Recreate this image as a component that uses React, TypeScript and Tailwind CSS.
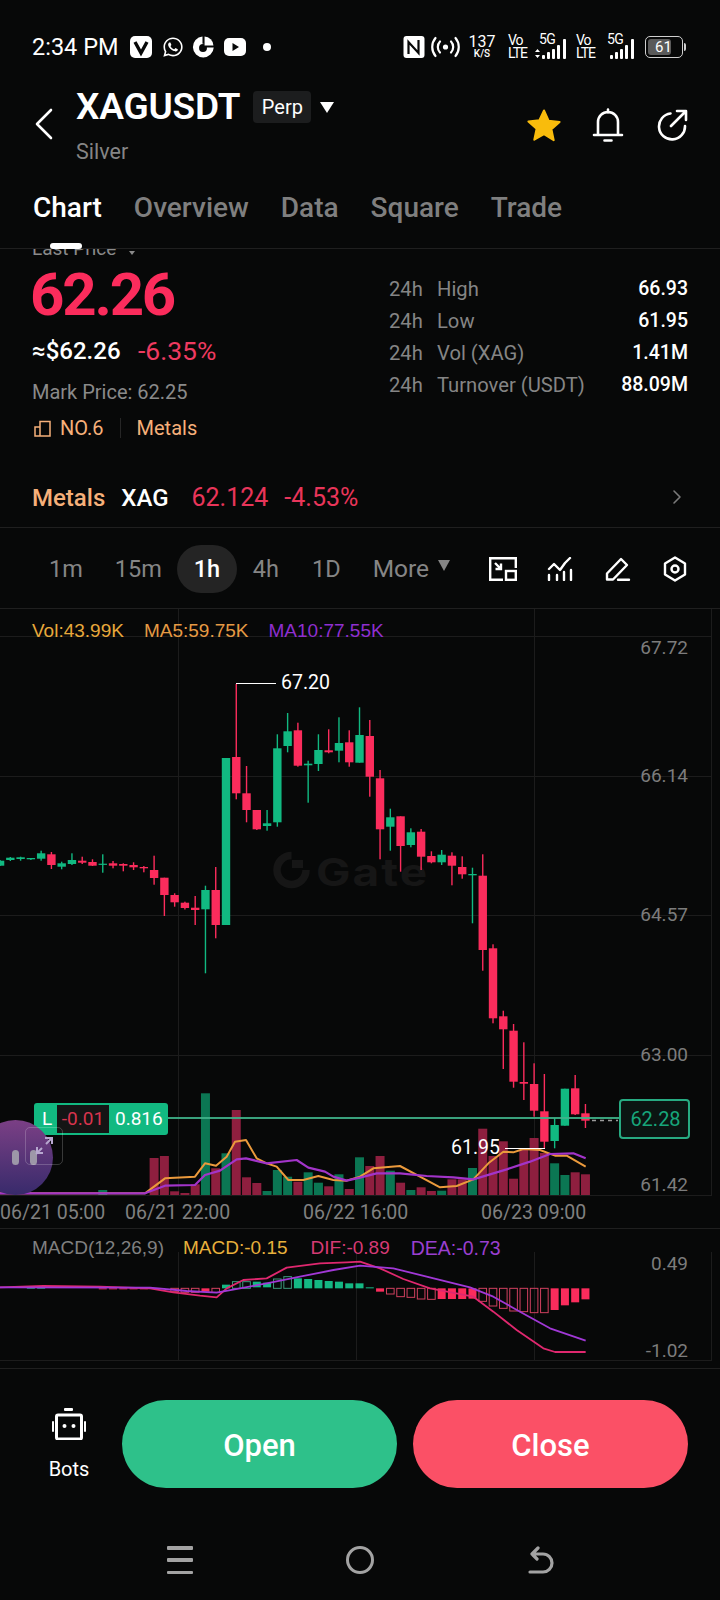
import React from 'react';
import { FaWhatsapp } from 'react-icons/fa';

const X = (i: number) => 0.06 + 10.27 * i;
const G = '#11b981';
const R = '#fb2c5c';
// [green?1:0, wickTop, wickBottom, bodyTop, bodyBottom]
const candles: number[][] = [
  [1, 860, 866, 860.7, 865.7], [1, 857, 861, 857.7, 860], [1, 856.7, 860.7, 857.3, 859], [1, 858, 860, 858, 859.3],
  [1, 850.7, 860.7, 853.3, 858.7], [0, 852, 869, 854.3, 865], [1, 861.7, 869.3, 863.3, 866.7], [1, 853.3, 865, 860, 864],
  [0, 856.7, 864, 860.7, 862.7], [0, 859.3, 866, 862, 865.7], [1, 854.3, 872.7, 863.7, 864.7], [0, 861, 868.3, 863.3, 865.7],
  [0, 863.3, 871.3, 864, 865.7], [0, 862.3, 870, 865, 867.3], [0, 866, 872.3, 867, 868.3], [0, 855.7, 884.7, 870, 878],
  [0, 877.7, 916, 877.7, 895], [0, 893.3, 906.7, 895, 902.3], [0, 901.7, 909.5, 902.7, 908], [0, 896, 925, 907.7, 910],
  [1, 885.7, 973.3, 890, 909.3], [0, 867, 938.3, 890, 925], [1, 758, 925, 758, 925],
  [0, 684, 799.3, 757, 793.3], [0, 766, 822.3, 793.3, 810], [0, 810, 830, 810, 829.3], [1, 810, 830.7, 823.3, 826],
  [1, 734.3, 826.7, 748.3, 822.3], [1, 713, 752.3, 731.3, 746], [0, 722.7, 766.7, 730.3, 765.7], [1, 760.7, 802.7, 763.7, 765.3],
  [1, 734.3, 771, 750, 764], [0, 729.3, 753.3, 750.3, 752.3], [1, 717.3, 762.3, 743, 750.7], [0, 730.3, 766.7, 742.3, 762.3],
  [1, 707.3, 762.7, 735, 762.7], [0, 720, 796.7, 736, 776.7], [0, 770, 859.3, 778.3, 829.3], [1, 808.7, 850.7, 817.3, 826.7],
  [0, 816.3, 871.7, 816.3, 846], [1, 828.3, 847.3, 832.3, 845], [0, 829, 870, 831.7, 856.7], [0, 851.3, 863.3, 856, 862.3],
  [1, 850, 865, 854.7, 862.3], [0, 852.3, 885.3, 855.7, 865.7], [0, 856.3, 878.7, 867, 874.3], [1, 867.7, 923.3, 874, 875.3],
  [0, 854.3, 970.7, 875.7, 950], [0, 944.3, 1023.3, 948.3, 1018.3], [0, 1010.7, 1069, 1016.3, 1029.3], [0, 1024, 1087.7, 1030.7, 1081.7],
  [0, 1042.3, 1100, 1082, 1083.7], [0, 1063.3, 1116.7, 1084, 1110.7], [0, 1074, 1148.3, 1111.3, 1141.7], [1, 1118.3, 1148.3, 1125, 1141],
  [1, 1088.7, 1125.7, 1088.7, 1125.7], [0, 1075, 1115, 1088.3, 1114.3], [0, 1104, 1128, 1113.3, 1120.7],
];
// [idx, top, green?1:0]
const vols: number[][] = [
  [10, 1190, 1], [15, 1158, 0], [16, 1156, 0], [17, 1191.3, 0], [18, 1193, 0], [19, 1184.3, 0], [20, 1093.3, 1], [21, 1168.3, 0],
  [22, 1153.3, 1], [23, 1110, 0], [24, 1177.3, 0], [25, 1183, 0], [26, 1191, 1], [27, 1170, 1], [28, 1176.7, 1], [29, 1181.7, 0],
  [30, 1172.3, 1], [31, 1182.7, 1], [32, 1186.3, 0], [33, 1174.3, 1], [34, 1189, 0], [35, 1157.3, 1], [36, 1166, 0], [37, 1156, 0],
  [38, 1170.7, 1], [39, 1182.7, 0], [40, 1190, 1], [41, 1187.3, 0], [42, 1191, 0], [43, 1190.7, 1], [44, 1179.3, 0], [45, 1179.3, 0],
  [46, 1168, 1], [47, 1128.7, 0], [48, 1156, 0], [49, 1141.3, 0], [50, 1178.7, 0], [51, 1150, 0], [52, 1138, 0], [53, 1153, 0],
  [54, 1163.3, 1], [55, 1175, 1], [56, 1172.3, 0], [57, 1174.3, 0],
];
const pts = (a: number[][], xo: number, yo: number) => a.map(([x, y]) => `${x / 3 + xo},${y / 3 + yo}`).join(' ');
const maOrange =
  pts([[0, 880], [435, 880], [495, 835], [585, 830], [615, 790], [648, 797], [680, 770], [705, 725], [738, 720], [770, 775], [800, 790], [830, 800], [865, 840], [910, 840], [955, 828], [1000, 840], [1040, 842], [1080, 830]], 0, 900) + ' ' +
  pts([[40, 805], [120, 798], [180, 830], [240, 862], [290, 858], [340, 838], [385, 790], [430, 755], [460, 757], [490, 747], [540, 750], [585, 767], [620, 767], [677, 800]], 360, 900);
const maPurple =
  pts([[0, 880], [435, 880], [495, 857], [585, 855], [615, 825], [660, 812], [710, 778], [738, 775], [800, 790], [890, 780], [925, 803], [975, 815], [1000, 830], [1040, 842], [1080, 833]], 0, 900) + ' ' +
  pts([[50, 820], [120, 820], [200, 828], [280, 832], [340, 838], [440, 808], [510, 785], [570, 762], [640, 760], [677, 775]], 360, 900);
const dif =
  pts([[0, 262], [130, 258], [300, 260], [450, 265], [520, 277], [600, 287], [650, 292], [680, 265], [730, 240], [800, 235], [860, 203], [960, 190], [1040, 187], [1080, 185]], 0, 1200) + ' ' +
  pts([[60, 205], [130, 237], [210, 265], [340, 290], [400, 335], [470, 390], [550, 445], [585, 456], [677, 456]], 360, 1200);
const dea =
  pts([[0, 262], [450, 263], [560, 273], [650, 278], [720, 265], [800, 250], [900, 230], [1000, 210], [1080, 197]], 0, 1200) + ' ' +
  pts([[100, 205], [200, 230], [330, 262], [400, 290], [480, 335], [570, 385], [677, 422]], 360, 1200);
// [idx, top, bottom, green, hollow]  zoom-y
const macd: number[][] = [
  [3, 262, 266, 1, 0], [4, 262, 266, 1, 0], [10, 265, 268, 0, 0], [11, 265, 268, 0, 0], [12, 265, 268, 0, 0], [13, 265, 268, 0, 0], [14, 265, 268, 0, 0],
  [17, 265, 275, 0, 1], [18, 265, 277, 0, 1], [19, 265, 277, 0, 1], [20, 265, 275, 0, 0], [21, 265, 277, 0, 1],
  [22, 254, 265, 1, 0], [23, 245, 265, 1, 1], [24, 245, 265, 1, 1], [25, 245, 262, 1, 0], [26, 248, 262, 1, 0], [27, 237, 265, 1, 1], [28, 230, 265, 1, 1],
  [29, 235, 265, 1, 0], [30, 237, 265, 1, 0], [31, 240, 265, 1, 0], [32, 243, 265, 1, 0], [33, 245, 265, 1, 0], [34, 250, 265, 1, 0], [35, 250, 265, 1, 0], [36, 262, 265, 1, 0],
  [37, 265, 275, 0, 0], [38, 265, 282, 0, 1], [39, 265, 290, 0, 1], [40, 265, 292, 0, 1], [41, 265, 297, 0, 1], [42, 265, 298, 0, 1], [43, 265, 297, 0, 0], [44, 265, 297, 0, 0], [45, 265, 297, 0, 0], [46, 265, 296, 0, 0],
  [47, 265, 304, 0, 1], [48, 265, 318, 0, 1], [49, 265, 325, 0, 1], [50, 265, 333, 0, 1], [51, 265, 335, 0, 1], [52, 265, 338, 0, 1], [53, 265, 338, 0, 1],
  [54, 265, 330, 0, 0], [55, 265, 316, 0, 0], [56, 265, 307, 0, 0], [57, 265, 298, 0, 0],
];

const Signal = ({ arrows }: { arrows?: boolean }) => (
  <svg width="34" height="22" viewBox="0 0 34 22" fill="#fff">
    {arrows && <path d="M1 14l2.5-3 2.5 3zM1 17l2.5 3 2.5-3z" />}
    <rect x="8" y="17" width="3" height="4" rx="1" />
    <rect x="13" y="14" width="3" height="7" rx="1" />
    <rect x="18" y="11" width="3" height="10" rx="1" />
    <rect x="23" y="7" width="3" height="14" rx="1" />
    <rect x="29" y="1" width="3" height="20" rx="1" />
  </svg>
);

const StatusBar = () => (
  <div className="h-[72px] pt-[22px] pl-[32px] text-white flex items-center">
    <span className="text-[23.5px] leading-[26px] w-[98px] shrink-0">2:34 PM</span>
    <svg width="22" height="22" viewBox="0 0 22 22" className="shrink-0">
      <rect width="22" height="22" rx="5" fill="#fff" />
      <path d="M5 6l6 11 6-11" fill="none" stroke="#070808" strokeWidth="3.4" />
    </svg>
    <FaWhatsapp className="ml-[10px] text-[22px] shrink-0" />
    <svg width="24" height="24" viewBox="0 0 23 23" className="ml-[7px] shrink-0">
      <path d="M11 1.5A10 10 0 1 0 21.8 12H12V8.5h-1z" fill="#fff" />
      <circle cx="11.5" cy="12.5" r="3.8" fill="#070808" />
      <path d="M13 1.5a9 9 0 0 1 8.5 8.5H13z" fill="#fff" />
    </svg>
    <svg width="22" height="18" viewBox="0 0 22 18" className="ml-[9px] shrink-0">
      <rect width="22" height="18" rx="5" fill="#fff" />
      <path d="M8.5 5v8l6.5-4z" fill="#070808" />
    </svg>
    <span className="ml-[17px] w-[8px] h-[8px] rounded-full bg-white shrink-0" />
    <svg width="22" height="22" viewBox="0 0 21 22" className="ml-[132px] shrink-0">
      <rect width="21" height="22" rx="3" fill="#fff" />
      <path d="M5 18V6l10 11V4" fill="none" stroke="#070808" strokeWidth="2.2" />
    </svg>
    <svg width="29" height="22" viewBox="0 0 29 22" className="ml-[6px] shrink-0" fill="none" stroke="#fff" strokeWidth="2.2" strokeLinecap="round">
      <circle cx="14.5" cy="11" r="2.6" fill="#fff" stroke="none" />
      <path d="M9 5.5a8 8 0 0 0 0 11M20 5.5a8 8 0 0 1 0 11M4.5 2a14 14 0 0 0 0 18M24.5 2a14 14 0 0 1 0 18" />
    </svg>
    <div className="ml-[10px] w-[24px] flex flex-col items-center shrink-0 -mt-[2px]">
      <span className="text-[16px] leading-[15px]">137</span>
      <span className="text-[10px] leading-[10px] font-medium">K/S</span>
    </div>
    <div className="ml-[14px] w-[22px] flex flex-col text-[14px] leading-[13px] tracking-[-1px] shrink-0">
      <span>Vo</span>
      <span>LTE</span>
    </div>
    <div className="relative ml-[4px] w-[34px] h-[24px] shrink-0">
      <span className="absolute left-[5px] -top-[2px] text-[14px] leading-[13px] tracking-[-0.5px]">5G</span>
      <div className="absolute left-0 top-[3px]"><Signal arrows /></div>
    </div>
    <div className="ml-[8px] w-[22px] flex flex-col text-[14px] leading-[13px] tracking-[-1px] shrink-0">
      <span>Vo</span>
      <span>LTE</span>
    </div>
    <div className="relative ml-[7px] w-[31px] h-[24px] shrink-0">
      <span className="absolute left-[2px] -top-[2px] text-[14px] leading-[13px] tracking-[-0.5px]">5G</span>
      <div className="absolute -left-[3px] top-[3px]"><Signal /></div>
    </div>
    <div className="ml-[9px] relative w-[38px] h-[22px] rounded-[5px] border border-[#cfcfcf] flex items-center p-[2px] shrink-0">
      <div className="w-[23px] h-full rounded-[3px] bg-[#5a5a5a]" />
      <span className="absolute left-[9px] text-[15px] leading-[18px]">61</span>
      <span className="absolute -right-[4px] w-[2px] h-[8px] rounded-r bg-[#cfcfcf]" />
    </div>
  </div>
);

const Header = () => (
  <div className="h-[104px] flex text-white">
    <svg width="20" height="32" viewBox="0 0 20 32" className="ml-[34px] mt-[36px]" fill="none" stroke="#fff" strokeWidth="2.6" strokeLinecap="round" strokeLinejoin="round">
      <path d="M17 2L3 16l14 14" />
    </svg>
    <div className="ml-[22px] flex flex-col pt-[15px]">
      <div className="flex items-center h-[40px]">
        <span className="text-[37px] leading-[40px] font-semibold tracking-[-0.2px]">XAGUSDT</span>
        <span className="ml-[13px] w-[58px] h-[32px] rounded-[4px] bg-[#1c1d1e] flex items-center justify-center text-[20px] leading-[24px]">Perp</span>
        <svg width="14" height="11" viewBox="0 0 14 11" className="ml-[9px]"><path d="M0 0h14l-7 11z" fill="#fff" /></svg>
      </div>
      <span className="mt-[12px] text-[21.5px] leading-[26px] text-[#858585]">Silver</span>
    </div>
    <div className="ml-auto pr-[32px] pt-[36px] flex items-start">
      <svg width="36" height="34" viewBox="0 0 36 34">
        <path d="M18 2.5l4.6 10.2 11 1.2-8.2 7.4 2.3 10.9L18 26.2l-9.7 5.5 2.3-10.900-8.200-7.400 11-1.200z" fill="#f9bc0c" stroke="#f9bc0c" strokeWidth="2" strokeLinejoin="round" />
      </svg>
      <svg width="32" height="34" viewBox="0 0 32 34" className="ml-[30px]" fill="none" stroke="#fff" strokeWidth="2.6" strokeLinecap="round" strokeLinejoin="round">
        <path d="M16 1.5v3M6 27V14a10 10 0 0 1 20 0v13M2 27h28M12.5 32.5h7" />
      </svg>
      <svg width="32" height="32" viewBox="0 0 32 32" className="ml-[32px] mt-[1px]" fill="none" stroke="#fff" strokeWidth="2.6" strokeLinecap="round" strokeLinejoin="round">
        <path d="M14.5 4.5A13 13 0 1 0 29 17M15 17L29.5 2.5M21 2h9v9" />
      </svg>
    </div>
  </div>
);

const Tabs = () => (
  <div className="relative h-[73px] border-b border-[#1f1f1f] pl-[33px] pt-[14px] flex gap-[32px] text-[28px] leading-[36px] font-medium text-[#7f7f7f]">
    <span className="text-white">Chart</span>
    <span>Overview</span>
    <span>Data</span>
    <span>Square</span>
    <span>Trade</span>
    <span className="absolute left-[50px] -bottom-[1px] w-[32px] h-[6px] rounded-full bg-white" />
  </div>
);

const Row = ({ k, v }: { k: string; v: string }) => (
  <div className="h-[32px] flex items-center text-[20.2px] leading-[32px]">
    <span className="w-[48px] text-[#858585]">24h</span>
    <span className="text-[#858585]">{k}</span>
    <span className="ml-auto text-white font-medium text-[19.5px]">{v}</span>
  </div>
);

const Stats = () => (
  <div className="h-[225px] overflow-hidden flex justify-between pl-[32px] pr-[32px]">
    <div className="flex flex-col">
      <div className="-mt-[10px] h-[20px] flex items-center text-[19px] leading-[20px] text-[#8a8a8a]">
        Last Price
        <svg width="6" height="4" viewBox="0 0 6 4" className="ml-[13px] mt-[8px]"><path d="M0 0h6L3 4z" fill="#8a8a8a" /></svg>
      </div>
      <div className="mt-[6px] -ml-[2px] text-[60px] leading-[60px] font-bold tracking-[-2.2px] text-[#fb2c5c]">62.26</div>
      <div className="mt-[12px] flex text-[24px] leading-[28px]">
        <span className="text-white font-medium w-[106px]">≈$62.26</span>
        <span className="text-[#ee3a60] text-[26.5px]">-6.35%</span>
      </div>
      <div className="mt-[15px] text-[20px] leading-[24px] text-[#8a8a8a]">Mark Price: 62.25</div>
      <div className="mt-[12px] flex items-center text-[20px] leading-[24px] text-[#f6b07a]">
        <svg width="17" height="17" viewBox="0 0 17 17" fill="none" stroke="#f6b07a" strokeWidth="1.5" className="ml-[2px]">
          <path d="M1 7h5v9H1zM6 1.5h10V16H6z" />
        </svg>
        <span className="ml-[9px]">NO.6</span>
        <span className="ml-[16px] w-px h-[20px] bg-[#262626]" />
        <span className="ml-[16px]">Metals</span>
      </div>
    </div>
    <div className="mt-[24px] w-[299px] flex flex-col">
      <Row k="High" v="66.93" />
      <Row k="Low" v="61.95" />
      <Row k="Vol (XAG)" v="1.41M" />
      <Row k="Turnover (USDT)" v="88.09M" />
    </div>
  </div>
);

const MetalsRow = () => (
  <div className="h-[54px] border-b border-[#1f1f1f] pl-[32px] pr-[38px] pb-[5px] flex items-center text-[24px] leading-[30px] font-medium">
    <span className="text-[#f6b07a]">Metals</span>
    <span className="ml-[16px] text-white">XAG</span>
    <span className="ml-[23px] text-[#e9355a] font-normal text-[25px]">62.124</span>
    <span className="ml-[16px] text-[#e9355a] font-normal text-[25px]">-4.53%</span>
    <svg width="10" height="16" viewBox="0 0 10 16" className="ml-auto -mt-[2px]" fill="none" stroke="#7a7a7a" strokeWidth="1.6" strokeLinecap="round" strokeLinejoin="round">
      <path d="M2 2l6 6-6 6" />
    </svg>
  </div>
);

const Timeframes = () => (
  <div className="h-[81px] border-b border-[#1f1f1f] pt-[1px] flex items-center text-[23.5px] leading-[30px] text-[#858585]">
    <span className="ml-[49px]">1m</span>
    <span className="ml-[32px]">15m</span>
    <span className="ml-[15px] w-[60px] h-[48px] rounded-full bg-[#242424] flex items-center justify-center text-white font-medium">1h</span>
    <span className="ml-[16px]">4h</span>
    <span className="ml-[33px]">1D</span>
    <span className="ml-[32px] text-[24.5px]">More</span>
    <svg width="12" height="11" viewBox="0 0 12 11" className="ml-[9px] -mt-[6px]"><path d="M0 0h12L6 11z" fill="#858585" /></svg>
    <svg width="28" height="24" viewBox="0 0 28 24" className="ml-[39px]" fill="none" stroke="#fff" strokeWidth="2.4">
      <path d="M14 22.8H1.2V1.2h25.6V11" />
      <rect x="17" y="14" width="9.8" height="8.8" />
      <path d="M6 6l6 6M12 6.5V12H6.5" />
    </svg>
    <svg width="26" height="24" viewBox="0 0 26 24" className="ml-[30px]" fill="none" stroke="#fff" strokeWidth="2.4" strokeLinecap="round" strokeLinejoin="round">
      <path d="M2 12l5-5 6 6 5-7 5-5M2 18v5M10 18v5M17 15v8M24 13v10" />
    </svg>
    <svg width="26" height="24" viewBox="0 0 26 24" className="ml-[32px]" fill="none" stroke="#fff" strokeWidth="2.4" strokeLinecap="round" strokeLinejoin="round">
      <path d="M2 22.5v-6L16 2l6 6L8 22.5zM13 22.8h11" />
    </svg>
    <svg width="24" height="26" viewBox="0 0 24 26" className="ml-[32px]" fill="none" stroke="#fff" strokeWidth="2.4" strokeLinejoin="round">
      <path d="M12 1.5l10 6v11l-10 6-10-6v-11z" />
      <circle cx="12" cy="13" r="3.5" />
    </svg>
  </div>
);

const axisCls = 'absolute right-[32px] text-[19px] leading-[24px] text-[#7c7c7c]';
const dateCls = 'absolute top-[592px] text-[19.5px] leading-[24px] text-[#808080]';

const MainChart = () => (
  <div className="relative h-[620px] border-b border-[#1f1f1f]">
    <span className="absolute left-[316px] top-[239px] scale-y-[0.82] font-['Inter',sans-serif] font-bold text-[46px] leading-[48px] tracking-[2px] text-[#161616]">Gate</span>
    <svg width="720" height="619" viewBox="0 609 720 619" className="absolute left-0 top-0">
      <g stroke="#1c1c1c" strokeWidth="1">
        {[636.5, 776.5, 915.5, 1055.5, 1195.5].map((y) => <line key={y} x1="0" x2="712" y1={y} y2={y} />)}
        {[178.5, 534.5, 711.5].map((x) => <line key={x} x1={x} x2={x} y1="609" y2="1195" />)}
      </g>
      <path d="M291.5 855.5A14.5 14.5 0 1 0 306 870" fill="none" stroke="#161616" strokeWidth="7.5" />
      <rect x="292" y="860" width="11" height="8" fill="#161616" />
      {vols.map(([i, t, g]) => (
        <rect key={i} x={X(i) - 4.5} y={t} width="9" height={1195 - t} fill={g ? '#0b7653' : '#8e1f3f'} />
      ))}
      <polyline points={maOrange} fill="none" stroke="#eb9a3c" strokeWidth="2" strokeLinejoin="round" />
      <polyline points={maPurple} fill="none" stroke="#a234c9" strokeWidth="2.2" strokeLinejoin="round" />
      {candles.map(([g, wt, wb, bt, bb], i) => (
        <g key={i} fill={g ? G : R}>
          <rect x={X(i) - 0.7} y={wt} width="1.4" height={wb - wt} />
          <rect x={X(i) - 4.2} y={bt} width="8.4" height={Math.max(bb - bt, 1.2)} />
        </g>
      ))}
      <line x1="168" x2="620" y1="1118" y2="1118" stroke="#3fb38a" strokeOpacity="0.9" strokeWidth="2" />
      <line x1="592" x2="618" y1="1120.5" y2="1120.5" stroke="#9a9a9a" strokeWidth="1.3" strokeDasharray="4 4" />
      <path d="M236 683.5h40" stroke="#fff" strokeWidth="1.2" />
      <path d="M505 1148.5h40" stroke="#fff" strokeWidth="1.2" />
    </svg>
    <div className="relative pl-[32px] pt-[10px] flex gap-[20px] font-['Liberation_Sans',sans-serif] text-[19px] leading-[24px]">
      <span className="text-[#e8a93b]">Vol:43.99K</span>
      <span className="text-[#e59a44]">MA5:59.75K</span>
      <span className="text-[#8f2fcf]">MA10:77.55K</span>
    </div>
    <span className={axisCls + ' top-[27px]'}>67.72</span>
    <span className={axisCls + ' top-[155px]'}>66.14</span>
    <span className={axisCls + ' top-[294px]'}>64.57</span>
    <span className={axisCls + ' top-[434px]'}>63.00</span>
    <span className={axisCls + ' top-[564px]'}>61.42</span>
    <span className="absolute left-[281px] top-[62px] text-[19.5px] leading-[24px] text-white">67.20</span>
    <span className="absolute left-[451px] top-[527px] text-[19.5px] leading-[24px] text-white">61.95</span>
    <span className={dateCls + ' left-0'}>06/21 05:00</span>
    <span className={dateCls + ' left-[125px]'}>06/21 22:00</span>
    <span className={dateCls + ' left-[303px]'}>06/22 16:00</span>
    <span className={dateCls + ' left-[481px]'}>06/23 09:00</span>
    <div className="absolute left-[34px] top-[494px] w-[134px] h-[32px] rounded-[3px] bg-[#12b981] flex items-center text-[19px] leading-[24px]">
      <span className="ml-[8px] w-[15px] text-white">L</span>
      <span className="w-[52px] h-[28px] bg-[#151515] flex items-center justify-center text-[#d8344e]">-0.01</span>
      <span className="ml-[6px] text-white">0.816</span>
    </div>
    <div className="absolute left-[619px] top-[490px] w-[71px] h-[40px] rounded-[4px] border-2 border-[#27ab82] bg-[#0b1512] flex items-center justify-center pl-[2px] text-[20px] leading-[24px] text-[#17a57a]">
      62.28
    </div>
    <div className="absolute -left-[22px] top-[511px] w-[75px] h-[75px] rounded-full bg-gradient-to-b from-[#7b3f85] to-[#382a6b] flex items-center justify-center gap-[11px] pl-[17px]">
      <span className="w-[7px] h-[15px] rounded-full bg-[#9d97a8]" />
      <span className="w-[7px] h-[15px] rounded-full bg-[#9d97a8]" />
    </div>
    <div className="absolute left-[25px] top-[518px] w-[38px] h-[38px] rounded-[5px] border border-white/20 flex items-center justify-center">
      <svg width="20" height="20" viewBox="0 0 20 20" fill="none" stroke="#b7a7cf" strokeWidth="2">
        <path d="M2 18l6-6M3 11v6h6M18 2l-6 6M11 2h7v6" />
      </svg>
    </div>
  </div>
);

const MacdChart = () => (
  <div className="relative h-[140px] border-b border-[#1f1f1f]">
    <svg width="720" height="140" viewBox="0 1229 720 140" className="absolute left-0 top-0">
      <g stroke="#1c1c1c" strokeWidth="1">
        <line x1="0" x2="712" y1="1360.5" y2="1360.5" />
        {[178.5, 356.5, 534.5, 711.5].map((x) => <line key={x} x1={x} x2={x} y1="1252" y2="1360" />)}
      </g>
      {macd.map(([i, t, b, g, h]) => {
        const c = g ? '#14b883' : R;
        const y = 1200 + t / 3;
        const ht = (b - t) / 3;
        return h ? (
          <rect key={i} x={X(i) - 3.8} y={y} width="7.6" height={ht} fill="none" stroke={g ? '#3a9a7c' : '#d0405f'} strokeWidth="1" />
        ) : (
          <rect key={i} x={X(i) - 4} y={y} width="8" height={ht} fill={c} />
        );
      })}
      <polyline points={dif} fill="none" stroke="#e0286f" strokeWidth="1.8" strokeLinejoin="round" />
      <polyline points={dea} fill="none" stroke="#a138d6" strokeWidth="1.8" strokeLinejoin="round" />
    </svg>
    <div className="relative pl-[32px] pt-[7px] flex font-['Liberation_Sans',sans-serif] text-[19px] leading-[24px]">
      <span className="text-[#808080]">MACD(12,26,9)</span>
      <span className="ml-[19px] text-[#e8b03c]">MACD:-0.15</span>
      <span className="ml-[23px] text-[#d63a75]">DIF:-0.89</span>
      <span className="ml-[21px] text-[#9a3fd0] text-[19.5px]">DEA:-0.73</span>
    </div>
    <span className={axisCls + ' top-[23px]'}>0.49</span>
    <span className={axisCls + ' top-[110px]'}>-1.02</span>
  </div>
);

const Bottom = () => (
  <div className="pt-[31px] flex items-start text-white">
    <div className="w-[122px] flex flex-col items-center pt-[8px] pl-[16px]">
      <svg width="34" height="32" viewBox="0 0 34 32" fill="#fff">
        <rect x="12" y="0" width="9" height="3" rx="1" />
        <rect x="4.5" y="7" width="25" height="24" rx="1.5" fill="none" stroke="#fff" strokeWidth="3" />
        <rect x="0" y="13" width="2" height="11" rx="1" />
        <rect x="32" y="13" width="2" height="11" rx="1" />
        <circle cx="12.5" cy="18" r="2" />
        <circle cx="21.5" cy="18" r="2" />
      </svg>
      <span className="mt-[17px] text-[20px] leading-[24px]">Bots</span>
    </div>
    <div className="w-[275px] h-[88px] pt-[3px] rounded-[44px] bg-[#2ec18a] flex items-center justify-center text-[31px] leading-[38px] font-medium">Open</div>
    <div className="ml-[16px] w-[275px] h-[88px] pt-[3px] rounded-[44px] bg-[#fb5066] flex items-center justify-center text-[31px] leading-[38px] font-medium">Close</div>
  </div>
);

const Nav = () => (
  <div className="mt-[58px] flex items-start">
    <div className="ml-[167px] w-[26px] h-[28px] flex flex-col justify-between">
      <span className="h-[3.5px] rounded-[1px] bg-[#a3a3a3]" />
      <span className="h-[3.5px] rounded-[1px] bg-[#a3a3a3]" />
      <span className="h-[3.5px] rounded-[1px] bg-[#a3a3a3]" />
    </div>
    <span className="ml-[153px] w-[28px] h-[28px] rounded-full border-[3px] border-[#a3a3a3]" />
    <svg width="28" height="28" viewBox="0 0 28 28" className="ml-[153px]" fill="none" stroke="#a3a3a3" strokeWidth="3.2" strokeLinecap="round" strokeLinejoin="round">
      <path d="M5 8h11a9 9 0 0 1 0 18H3M11 2L5 8l5 5" />
    </svg>
  </div>
);

export default function App() {
  return (
    <div className="w-[720px] h-[1600px] overflow-hidden bg-[#070808] font-['Roboto',sans-serif] flex flex-col">
      <StatusBar />
      <Header />
      <Tabs />
      <Stats />
      <MetalsRow />
      <Timeframes />
      <MainChart />
      <MacdChart />
      <Bottom />
      <Nav />
    </div>
  );
}
